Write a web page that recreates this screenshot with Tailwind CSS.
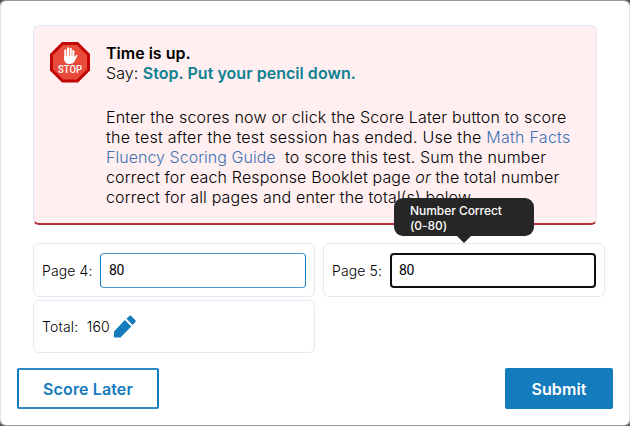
<!DOCTYPE html>
<html lang="en">
<head>
<meta charset="utf-8">
<title>Time is up</title>
<script src="https://cdn.jsdelivr.net/npm/@tailwindcss/browser@4"></script>
</head>
<body class="bg-[#555558] font-['Inter',sans-serif] text-black">
<main class="w-[630px] h-[426px] overflow-hidden pt-px">
  <div class="h-[424px] rounded-[6px] bg-white border-x border-[#e1e4f0] flex flex-col pt-[24px] pl-[32px] shadow-[0_0_0_1px_#99989e]">
    <section class="w-[564px] h-[200px] shrink-0 rounded-[6px] bg-[#ffeff0] border border-[#e3e3ee] border-b-2 border-b-[#b3303a] flex pl-4 pt-4">
      <svg class="w-10 h-[41px] shrink-0" viewBox="0 0 40 41">
        <path d="M12 0H28L40 12V28.5L28 40.5H12L0 28.5V12Z" fill="#c30506"/>
        <path d="M13.2 3H26.8L37 13.2V27.3L26.8 37.5H13.2L3 27.3V13.2Z" fill="#e84b3c"/>
        <path d="M15.3 17.5V8.3M18 16V6.2M20.7 16V6.8M23.3 17V9" stroke="#fff" stroke-width="2.1" stroke-linecap="round"/>
        <path d="M14.2 14H24.4V15.6L26 13.2Q27 12.3 27.5 13.5L24.5 19.5Q23 22 19.5 22Q14.2 22 14.2 17Z" fill="#fff"/>
        <text x="8" y="31" textLength="24" lengthAdjust="spacingAndGlyphs" fill="#fff" class="font-['Roboto'] text-[11px] font-medium">STOP</text>
      </svg>
      <div class="ml-4 pt-px text-[16px] leading-[20px] whitespace-nowrap font-light">
        <p class="font-semibold">Time is up.</p>
        <p class="tracking-[0.04px]">Say: <b class="font-semibold text-[#0e8092]">Stop. Put your pencil down.</b></p>
        <p class="mt-[24px] tracking-[0.19px] font-light">Enter the scores now or click the Score Later button to score<br><span class="tracking-[0.26px]">the test after the test session has ended. Use the <a class="text-[#3d71b6]">Math Facts</a></span><br><a class="text-[#3d71b6] tracking-[0.03px]">Fluency Scoring Guide</a>&nbsp; to score this test. Sum the number<br><span class="tracking-[0.15px]">correct for each Response Booklet page <i>or</i> the total number</span><br><span class="tracking-[0.17px]">correct for all pages and enter the total(s) below.</span></p>
      </div>
    </section>
    <section class="mt-[18px] grid grid-cols-[282px_282px] grid-rows-[54px_53px] gap-x-2 gap-y-[3px] text-[14px] font-light tracking-[0.12px]">
      <div class="rounded-[6px] border border-[#e8eaf3] flex items-center pl-2">
        <label class="w-[58px]">Page 4:</label>
        <div class="w-[206px] h-[35px] rounded-[4px] border border-[#147bbc] border-y-[#4d9ccd] flex items-center pl-2"><span class="font-['Roboto'] text-[14px] font-normal tracking-[-0.4px]">80</span></div>
      </div>
      <div class="relative rounded-[6px] border border-[#e8eaf3] flex items-center pl-2">
        <label class="w-[58px]">Page 5:</label>
        <div class="w-[206px] h-[35px] rounded-[4px] border-2 border-[#101010] flex items-center pl-[7px]"><span class="font-['Roboto'] text-[14px] font-normal tracking-[-0.4px]">80</span></div>
        <div class="absolute left-[70px] top-[-46px] w-[140px] h-[38px] rounded-[9px] bg-[#262626] text-white text-[12px] leading-[15px] pl-4 pt-[5px] font-medium tracking-[-0.05px]">Number Correct<br>(0-80)
          <svg class="absolute left-[62px] top-[37px] w-4 h-2" viewBox="0 0 16 8"><path d="M0 0H16L8 8Z" fill="#262626"/></svg>
        </div>
      </div>
      <div class="rounded-[6px] border border-[#e8eaf3] flex items-center pl-2">
        <span class="w-[69px] tracking-[0.2px]">Total:&nbsp; 160</span>
        <svg class="w-[24px] h-[24px] ml-[2px]" viewBox="0 0 24 24" fill="#147bbc"><path d="M1 16.5V22.5H7.5L18.3 11.6L11.8 5.1ZM13.5 3.7L16.4 1Q17.3 .2 18.2 1L22.4 5.2Q23.2 6.1 22.4 7L19.5 9.9Z"/></svg>
      </div>
    </section>
    <footer class="-ml-4 mt-[15px] w-[596px] flex justify-between text-[16px] font-semibold tracking-[0.12px]">
      <button class="w-[142px] h-[41px] rounded-[2px] border-2 border-[#147bbc] border-y-[#2e8ac4] text-[#147bbc] bg-white pt-px">Score Later</button>
      <button class="w-[108px] h-[41px] rounded-[2px] bg-[#147bbc] text-white pt-px">Submit</button>
    </footer>
  </div>
</main>
</body>
</html>
